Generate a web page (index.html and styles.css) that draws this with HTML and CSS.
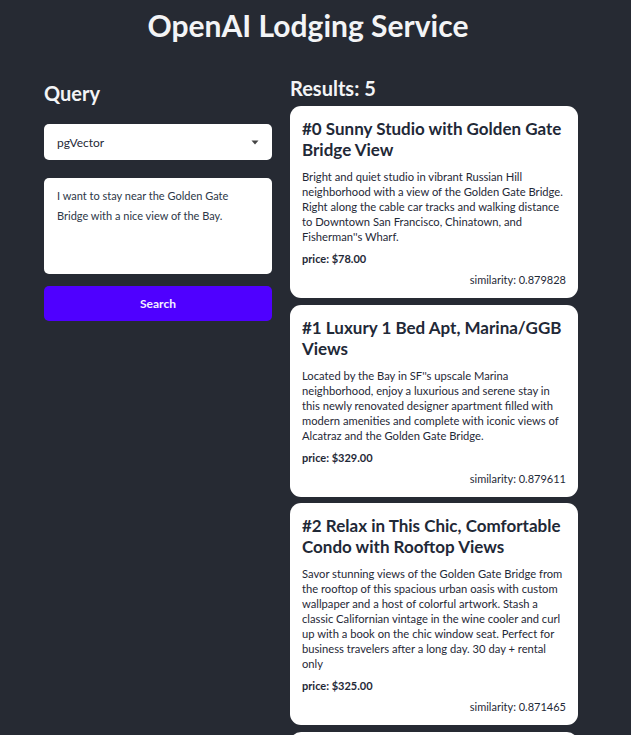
FILE: index.html
```html
<!DOCTYPE html>
<html>
<head>
<meta charset="utf-8">
<link rel="stylesheet" href="styles.css">
</head>
<body>
<div class="page">
  <h1 class="title">OpenAI Lodging Service</h1>
  <div class="columns">
    <div class="query">
      <h2 class="heading">Query</h2>
      <div class="select">
        <span>pgVector</span>
        <svg class="caret" width="8" height="5" viewBox="0 0 8 5"><path d="M0.5 0.5 L7.5 0.5 L4 4.5 Z" fill="#444"/></svg>
      </div>
      <div class="textarea">I want to stay near the Golden Gate Bridge with a nice view of the Bay.</div>
      <div class="button">Search</div>
    </div>
    <div class="results">
      <h2 class="heading results-heading">Results: 5</h2>
      <div class="card">
        <h3 class="card-title">#0 Sunny Studio with Golden Gate Bridge View</h3>
        <p class="desc">Bright and quiet studio in vibrant Russian Hill neighborhood with a view of the Golden Gate Bridge. Right along the cable car tracks and walking distance to Downtown San Francisco, Chinatown, and Fisherman''s Wharf.</p>
        <p class="price">price: $78.00</p>
        <p class="sim">similarity: 0.879828</p>
      </div>
      <div class="card">
        <h3 class="card-title">#1 Luxury 1 Bed Apt, Marina/GGB Views</h3>
        <p class="desc">Located by the Bay in SF''s upscale Marina neighborhood, enjoy a luxurious and serene stay in this newly renovated designer apartment filled with modern amenities and complete with iconic views of Alcatraz and the Golden Gate Bridge.</p>
        <p class="price">price: $329.00</p>
        <p class="sim">similarity: 0.879611</p>
      </div>
      <div class="card">
        <h3 class="card-title">#2 Relax in This Chic, Comfortable Condo with Rooftop Views</h3>
        <p class="desc">Savor stunning views of the Golden Gate Bridge from the rooftop of this spacious urban oasis with custom wallpaper and a host of colorful artwork. Stash a classic Californian vintage in the wine cooler and curl up with a book on the chic window seat. Perfect for business travelers after a long day. 30 day + rental only</p>
        <p class="price">price: $325.00</p>
        <p class="sim">similarity: 0.871465</p>
      </div>
      <div class="card card-peek"></div>
    </div>
  </div>
</div>
</body>
</html>
```

FILE: styles.css
```css
html, body {
  margin: 0;
  padding: 0;
  background: #262a33;
  height: 100%;
  overflow: hidden;
}
body {
  font-family: "Lato", "Noto Sans", sans-serif;
  color: #1f2937;
}
.page {
  width: 534px;
  margin: 0 0 0 44px;
}
.title {
  margin: 0 0 0 -6px;
  padding-top: 7px;
  height: 43px;
  font-size: 30px;
  line-height: 36px;
  font-weight: 700;
  color: #f3f4f6;
  text-align: center;
}
.columns {
  display: flex;
  gap: 18px;
  margin-top: 27px;
}
.query {
  width: 228px;
  display: flex;
  flex-direction: column;
  padding-top: 4px;
}
.heading {
  margin: 0;
  font-size: 20px;
  line-height: 24px;
  font-weight: 700;
  color: #f3f4f6;
}
.query .heading {
  margin-bottom: 19px;
}
.select {
  height: 36px;
  background: #fff;
  border-radius: 5px;
  display: flex;
  align-items: center;
  justify-content: space-between;
  padding: 0 13px 0 13px;
  font-size: 12px;
  color: #1f2937;
  box-sizing: border-box;
}
.caret { display: block; }
.textarea {
  margin-top: 18px;
  height: 96px;
  box-sizing: border-box;
  background: #fff;
  border-radius: 5px;
  padding: 8px 13px;
  font-size: 11px;
  line-height: 20px;
  color: #2d3748;
}
.button {
  margin-top: 12px;
  height: 35px;
  border-radius: 5px;
  background: #4f00ff;
  color: #f3f0ff;
  font-weight: 700;
  font-size: 12px;
  display: flex;
  align-items: center;
  justify-content: center;
}
.results {
  width: 288px;
  display: flex;
  flex-direction: column;
  gap: 6.5px;
}
.results-heading {
  margin-bottom: 0.5px;
  line-height: 22px;
}
.card {
  background: #fff;
  border-radius: 11px;
  padding: 12px 12px 11px;
}
.card-peek {
  height: 60px;
}
.card-title {
  margin: 0 0 9px;
  font-size: 17px;
  line-height: 21px;
  font-weight: 700;
  color: #1f2937;
}
.desc {
  margin: 0;
  font-size: 11.2px;
  line-height: 15px;
  color: #1f2937;
}
.price {
  margin: 7px 0 0;
  font-size: 11px;
  line-height: 15px;
  font-weight: 700;
}
.sim {
  margin: 6px 0 0;
  font-size: 11px;
  line-height: 15px;
  text-align: right;
}
```
